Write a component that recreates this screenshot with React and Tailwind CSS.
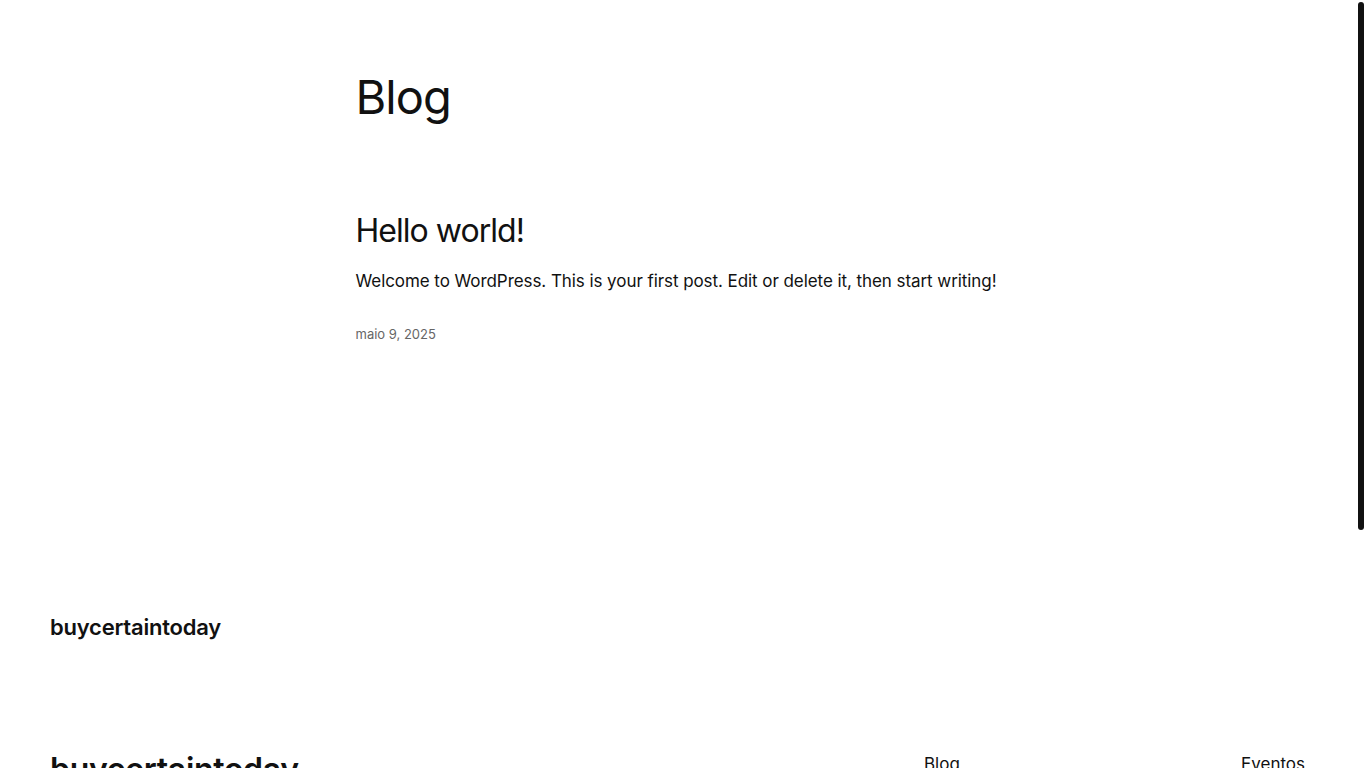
export default function App() {
  return (
    <div className="relative h-screen w-full overflow-hidden bg-white text-[#111111]" style={{ fontFamily: "Inter, 'Noto Sans', sans-serif" }}>
      <div className="w-[1356px]">
        {/* Main content */}
        <main className="mx-auto w-[645px]">
          <h1 className="mt-[73px] text-[47px] leading-none font-normal tracking-[-0.02em]">Blog</h1>

          <article className="mt-[95px]">
            <h2 className="text-[32px] leading-none font-normal tracking-[-0.03em]">Hello world!</h2>
            <p className="mt-[26px] whitespace-nowrap text-[17px] leading-none tracking-[-0.004em]">
              Welcome to WordPress. This is your first post. Edit or delete it, then start writing!
            </p>
            <p className="mt-[38px] text-[13px] leading-none text-[#666666]">maio 9, 2025</p>
          </article>
        </main>

        {/* Footer */}
        <footer className="pl-[50px] pr-[51px]">
          <div className="mt-[275px] text-[22px] leading-none font-semibold tracking-[-0.01em]">buycertaintoday</div>
          <div className="mt-[116px] flex items-start">
            <div className="flex-1 text-[32px] leading-none font-semibold tracking-[-0.01em]">buycertaintoday</div>
            <nav className="mt-[2px] flex w-[381px] justify-between text-[17px] leading-none">
              <a>Blog</a>
              <a>Eventos</a>
            </nav>
          </div>
        </footer>
      </div>

      {/* Scrollbar thumb */}
      <div className="absolute right-[2px] top-[2px] h-[528px] w-[6px] rounded-full bg-[#111111]" />
    </div>
  );
}
